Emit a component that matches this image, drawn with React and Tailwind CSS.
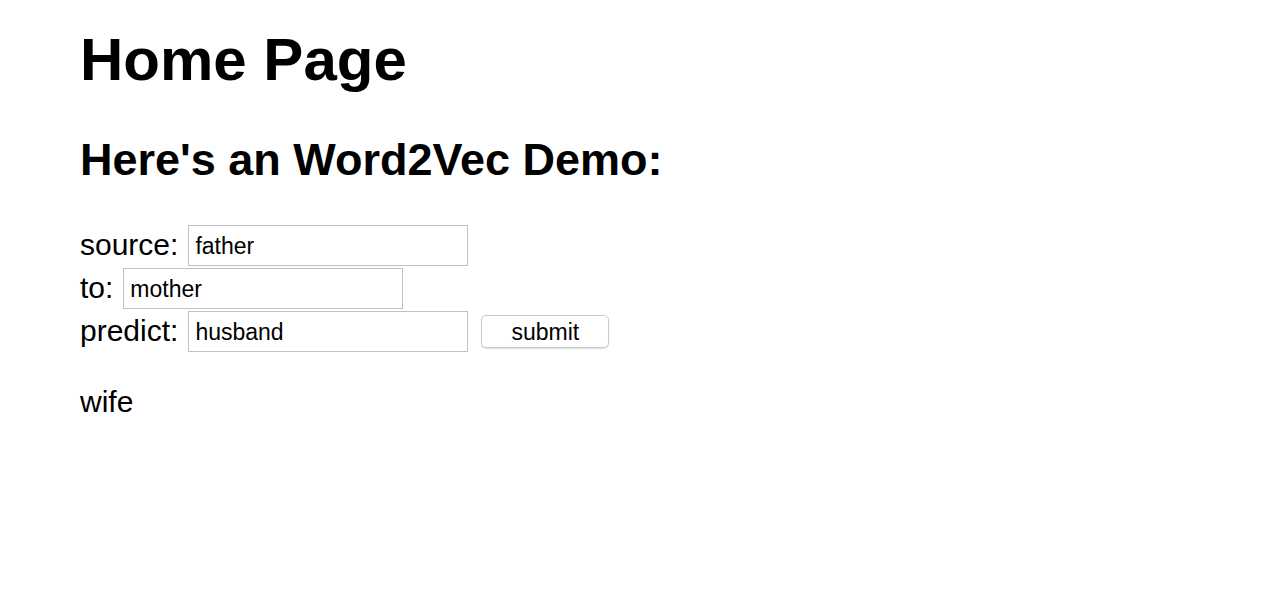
export default function App() {
  const font = { fontFamily: '"Liberation Sans", Arial, Helvetica, sans-serif' };
  const inputCls =
    "w-[280px] h-[41px] border border-[#c2c2c2] pl-[6px] pr-[6px] pt-[2px] text-[23px] text-black outline-none";
  return (
    <div className="min-h-[606px] bg-white text-black pl-[80px] pt-[25px]" style={font}>
      <h1 className="text-[60px] font-bold leading-[69px] m-0">Home Page</h1>
      <h2 className="mt-[40px] text-[45px] font-bold leading-[52px]">Here's an Word2Vec Demo:</h2>
      <div className="mt-[39px] flex flex-col gap-[2px] text-[30px] leading-[34px]">
        <div className="flex items-center gap-[10px]">
          <span className="pb-[2px]">source:</span>
          <input readOnly value="father" className={inputCls} style={font} />
        </div>
        <div className="flex items-center gap-[10px]">
          <span className="pb-[2px]">to:</span>
          <input readOnly value="mother" className={inputCls} style={font} />
        </div>
        <div className="flex items-center gap-[10px]">
          <span className="pb-[2px]">predict:</span>
          <input readOnly value="husband" className={inputCls} style={font} />
          <button
            className="ml-[3px] w-[128px] h-[33px] rounded-[5px] border border-[#cbcbcb] bg-white pt-[2px] text-[23px] leading-none text-black shadow-[0_1px_1px_rgba(0,0,0,0.12)]"
            style={font}
          >
            submit
          </button>
        </div>
      </div>
      <div className="mt-[33px] text-[30px] leading-[34px]">wife</div>
    </div>
  );
}
